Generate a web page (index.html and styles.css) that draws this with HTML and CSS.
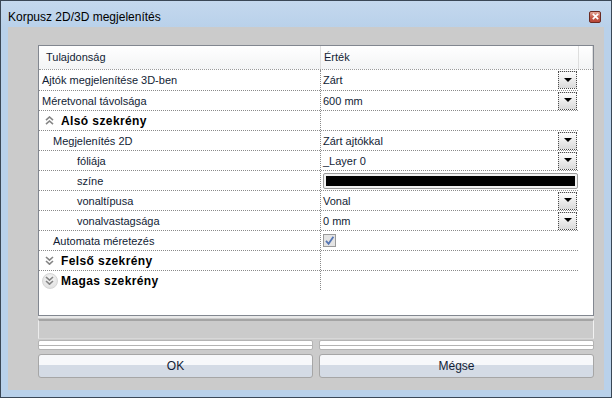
FILE: index.html
```html
<!DOCTYPE html>
<html lang="hu">
<head>
  <meta charset="UTF-8" />
  <title>Korpusz 2D/3D megjelenítés</title>
  <link rel="stylesheet" href="styles.css">
</head>
<body>
  <div class="window">
    <div class="titlebar">
      <span class="title">Korpusz 2D/3D megjelenítés</span>
      <span class="close-btn">
        <svg width="7" height="7" viewBox="0 0 7 7"><path d="M0.8 0.8 L6.2 6.2 M6.2 0.8 L0.8 6.2" stroke="#fff" stroke-width="1.7" /></svg>
      </span>
    </div>
    <div class="client">
      <div class="grid">
        <div class="grid-head">
          <div class="hcell name-col">Tulajdonság</div>
          <div class="hcell value-col">Érték</div>
          <div class="hcell extra-col"></div>
        </div>

        <div class="row">
          <div class="name">Ajtók megjelenítése 3D-ben</div>
          <div class="value"><span class="val-text">Zárt</span><span class="drop"><i></i></span></div>
        </div>
        <div class="row">
          <div class="name">Méretvonal távolsága</div>
          <div class="value"><span class="val-text">600 mm</span><span class="drop"><i></i></span></div>
        </div>
        <div class="row">
          <div class="name cat">
            <span class="chev"><svg width="9" height="9" viewBox="0 0 9 9"><path d="M1 4.2 L4.5 1 L8 4.2 M1 8.2 L4.5 5 L8 8.2" fill="none" stroke="#858585" stroke-width="1.6" /></svg></span>
            Alsó szekrény
          </div>
          <div class="value"></div>
        </div>
        <div class="row">
          <div class="name lvl1">Megjelenítés 2D</div>
          <div class="value"><span class="val-text">Zárt ajtókkal</span><span class="drop"><i></i></span></div>
        </div>
        <div class="row">
          <div class="name lvl2">fóliája</div>
          <div class="value"><span class="val-text">_Layer 0</span><span class="drop"><i></i></span></div>
        </div>
        <div class="row">
          <div class="name lvl2">színe</div>
          <div class="value"><span class="swatch"><span class="swatch-fill"></span></span></div>
        </div>
        <div class="row">
          <div class="name lvl2">vonaltípusa</div>
          <div class="value"><span class="val-text">Vonal</span><span class="drop"><i></i></span></div>
        </div>
        <div class="row">
          <div class="name lvl2">vonalvastagsága</div>
          <div class="value"><span class="val-text">0 mm</span><span class="drop"><i></i></span></div>
        </div>
        <div class="row">
          <div class="name lvl1">Automata méretezés</div>
          <div class="value">
            <span class="checkbox"><svg width="11" height="11" viewBox="0 0 11 11"><path d="M2 5.8 L4.6 8.8 L9.4 1.8" fill="none" stroke="#5676b4" stroke-width="1.8" /></svg></span>
          </div>
        </div>
        <div class="row">
          <div class="name cat">
            <span class="chev"><svg width="9" height="9" viewBox="0 0 9 9"><path d="M1 1 L4.5 4.2 L8 1 M1 5 L4.5 8.2 L8 5" fill="none" stroke="#858585" stroke-width="1.6" /></svg></span>
            Felső szekrény
          </div>
          <div class="value"></div>
        </div>
        <div class="row">
          <div class="name cat">
            <span class="chev hover"><svg width="9" height="9" viewBox="0 0 9 9"><path d="M1 1 L4.5 4.2 L8 1 M1 5 L4.5 8.2 L8 5" fill="none" stroke="#858585" stroke-width="1.6" /></svg></span>
            Magas szekrény
          </div>
          <div class="value"></div>
        </div>
        <div class="grid-fill"></div>
      </div>

      <div class="desc"></div>

      <div class="mini-row">
        <div class="mini"></div>
        <div class="mini"></div>
      </div>

      <div class="buttons">
        <button class="btn">OK</button>
        <button class="btn">Mégse</button>
      </div>
    </div>
  </div>
</body>
</html>
```

FILE: styles.css
```css
* {
  box-sizing: border-box;
}
body {
  margin: 0;
  font-family: "Liberation Sans", Arial, sans-serif;
  font-size: 11px;
  color: #121d35;
}
.window {
  width: 612px;
  height: 398px;
  border: 1px solid #3a4756;
  background: #b9d1ea;
  display: flex;
  flex-direction: column;
  padding: 0 7px 7px;
}
.titlebar {
  height: 26px;
  display: flex;
  align-items: center;
  justify-content: space-between;
  padding: 5px 10px 0 7px;
  background: linear-gradient(#c4d8ee, #b9d1ea);
  margin: 0 -7px;
}
.title {
  font-size: 12px;
  color: #000;
}
.close-btn {
  width: 12px;
  height: 12px;
  border: 1px solid #6b2a22;
  border-radius: 2px;
  background: linear-gradient(#e3a597, #c45a48 55%, #b8473a);
  display: flex;
  align-items: center;
  justify-content: center;
}
.client {
  flex: 1;
  background: #cbcbcb;
  padding: 18px 10px 12px 30px;
  display: flex;
  flex-direction: column;
}
.grid {
  height: 271px;
  border: 1px solid #828790;
  background: #fff;
  display: flex;
  flex-direction: column;
  box-shadow: 0 2px 0 #e9e9e9;
}
.grid-head {
  height: 24px;
  display: flex;
  background: linear-gradient(#ffffff, #f3f4f5);
  border-bottom: 1px dotted #9a9a9a;
}
.hcell {
  padding: 5px 0 0 3px;
  border-right: 1px solid #dedede;
}
.hcell.name-col {
  width: 282px;
  padding-left: 7px;
}
.hcell.value-col {
  width: 258px;
}
.hcell.extra-col {
  width: 14px;
}
.row {
  width: 539px;
  height: 20px;
  display: flex;
}
.row + .row {
  border-top: 1px dotted #8a8a8a;
}
.name {
  width: 281px;
  padding-left: 3px;
  display: flex;
  align-items: center;
}
.name.lvl1 {
  padding-left: 14px;
}
.name.lvl2 {
  padding-left: 38px;
}
.name.cat {
  padding-left: 6px;
  font-size: 12px;
  font-weight: bold;
  letter-spacing: 0.4px;
  color: #000;
  gap: 7px;
}
.chev {
  width: 9px;
  height: 9px;
  display: flex;
  position: relative;
}
.chev.hover::before {
  content: '';
  position: absolute;
  left: -3px;
  top: -3px;
  width: 14px;
  height: 14px;
  border-radius: 50%;
  background: radial-gradient(circle at 50% 35%, #f6f6f6, #dcdcdc);
  border: 1px solid #d6d6d6;
}
.chev svg {
  position: relative;
}
.value {
  flex: 1;
  border-left: 1px dotted #8a8a8a;
  padding-left: 2px;
  display: flex;
  align-items: center;
}
.val-text {
  flex: 1;
}
.drop {
  width: 19px;
  height: 18px;
  margin-right: 1px;
  border: 1px dotted #4a4a4a;
  background: linear-gradient(#fdfdfd, #dadada);
  display: flex;
  align-items: center;
  justify-content: center;
}
.drop i {
  width: 0;
  height: 0;
  border-left: 4px solid transparent;
  border-right: 4px solid transparent;
  border-top: 4px solid #000;
  margin-bottom: 1px;
}
.swatch {
  width: 255px;
  height: 16px;
  border: 1px solid #9c9c9c;
  border-radius: 2px;
  padding: 2px;
  background: #f2f2f2;
  display: flex;
}
.swatch-fill {
  flex: 1;
  background: #000;
}
.checkbox {
  width: 13px;
  height: 13px;
  border: 1px solid #9a9a9a;
  background: #e4e4e4;
  display: flex;
  align-items: center;
  justify-content: center;
}
.grid-fill {
  flex: 1;
}
.desc {
  margin-top: 3px;
  height: 20px;
  border-top: 2px solid #a4a4a4;
  border-left: 1px solid #ececec;
  border-right: 1px solid #f2f2f2;
  border-bottom: 1px solid #d8d8d8;
}
.mini-row {
  margin-top: 1px;
  display: flex;
  gap: 6px;
}
.mini {
  flex: 1;
  height: 10px;
  border: 1px solid #b4b4b4;
  border-radius: 2px;
  background: linear-gradient(#fff 0 50%, #b4b4b4 50% 62%, #fff 62%);
}
.buttons {
  margin-top: 4px;
  display: flex;
  gap: 6px;
}
.btn {
  flex: 1;
  height: 24px;
  border: 1px solid #a6a6a6;
  border-radius: 3px;
  background: linear-gradient(#f7f8fa 0 46%, #d4dbe5 46%);
  font-family: "Liberation Sans", Arial, sans-serif;
  font-size: 12px;
  color: #121d35;
  padding: 0;
}
```
